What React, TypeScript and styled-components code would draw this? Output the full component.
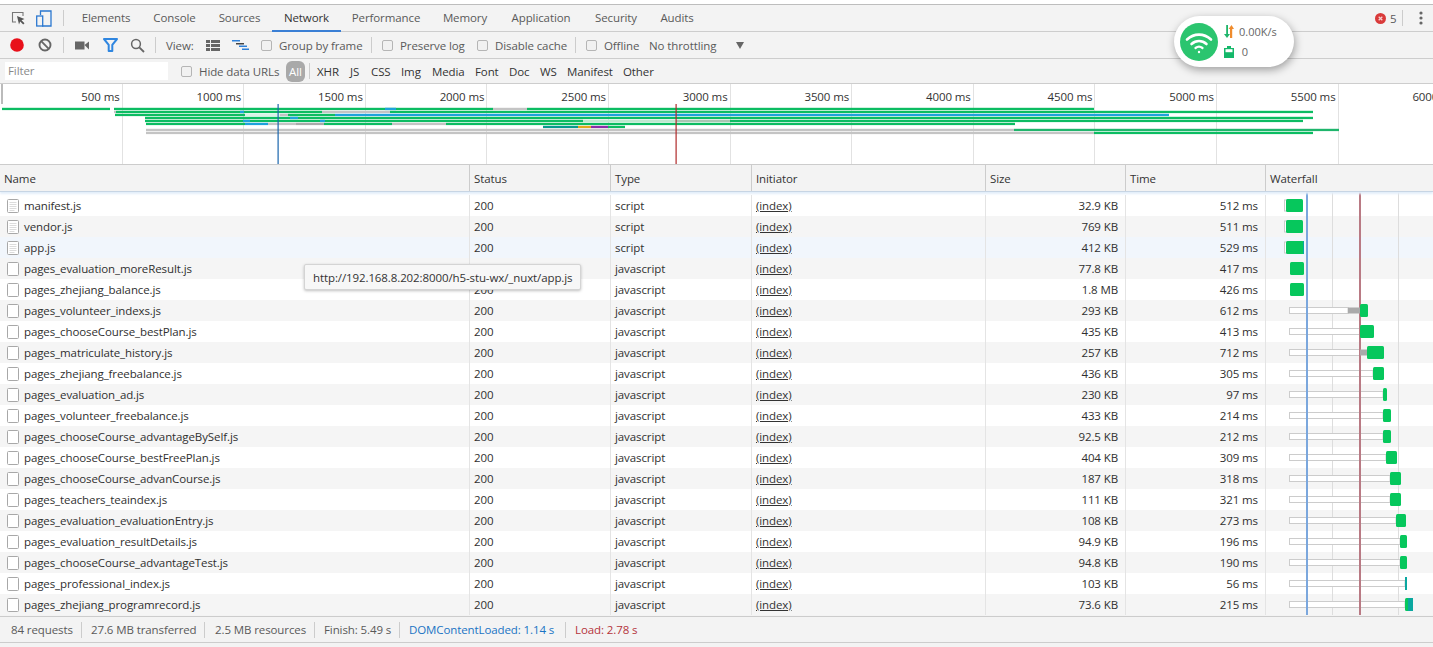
import React from "react";
import styled, { createGlobalStyle } from "styled-components";

const Global = createGlobalStyle`
  html, body { margin: 0; padding: 0; height: 647px; overflow: hidden; background: #f3f3f3; }
  #root { height: 647px; }
`;

const Page = styled.div`
  position: relative;
  width: 1433px;
  height: 647px;
  overflow: hidden;
  background: #f3f3f3;
  color: #303942;
  font: 11.5px "Open Sans", "Noto Sans", sans-serif;
  letter-spacing: -0.1px;
  padding-top: 4px;
  box-sizing: border-box;
  box-shadow: inset 0 4px 0 #fff;
`;

const TabBar = styled.div`
  display: flex;
  align-items: stretch;
  height: 28px;
  box-sizing: border-box;
  border-top: 1px solid #bdbdbd;
  border-bottom: 1px solid #cdcdcd;
  padding-left: 6px;
`;
const IconSlot = styled.div<{ $w: number }>`
  width: ${(p) => p.$w}px;
  flex: none;
  display: flex;
  align-items: center;
  justify-content: center;
`;
const VSep = styled.div<{ $mx?: number }>`
  width: 1px;
  height: 16px;
  flex: none;
  align-self: center;
  background: #ccc;
  margin: 0 ${(p) => p.$mx ?? 0}px;
`;
const Tab = styled.div<{ $w: number; $active?: boolean }>`
  width: ${(p) => p.$w}px;
  flex: none;
  box-sizing: border-box;
  display: flex;
  align-items: center;
  justify-content: center;
  white-space: nowrap;
  color: ${(p) => (p.$active ? "#333" : "#5a5a5a")};
  margin-bottom: -1px;
  border-bottom: 2px solid ${(p) => (p.$active ? "#3a7fd5" : "transparent")};
`;
const TabTools = styled.div`
  margin-left: auto;
  display: flex;
  align-items: center;
  color: #5a5a5a;
`;
const ErrorCount = styled.span`
  margin: 0 5px 0 4px;
  width: 7px;
`;

const Toolbar = styled.div<{ $h: number }>`
  display: flex;
  align-items: center;
  height: ${(p) => p.$h}px;
  box-sizing: border-box;
  border-bottom: 1px solid #cdcdcd;
  white-space: nowrap;
  color: #5a5a5a;
`;
const Label = styled.span<{ $w: number; $dark?: boolean }>`
  width: ${(p) => p.$w}px;
  flex: none;
  white-space: nowrap;
  color: ${(p) => (p.$dark ? "#333" : "#5a5a5a")};
`;
const Check = styled.span<{ $ml: number }>`
  width: 11px;
  height: 11px;
  flex: none;
  box-sizing: border-box;
  border: 1px solid #b5b5b5;
  border-radius: 2px;
  background: #f1f1f1;
  margin-left: ${(p) => p.$ml}px;
  margin-right: 7px;
`;
const FilterInput = styled.div`
  width: 163px;
  height: 18px;
  margin-left: 5px;
  flex: none;
  background: #fff;
  color: #8a8a8a;
  padding-left: 3px;
  line-height: 18px;
  box-sizing: border-box;
`;
const AllPill = styled.span`
  width: 19px;
  height: 21px;
  margin-left: 6px;
  flex: none;
  border-radius: 6px;
  background: #a9a9a9;
  color: #fff;
  display: flex;
  align-items: center;
  justify-content: center;
`;

const Overview = styled.div`
  position: relative;
  height: 81px;
  background: #fff;
  border-bottom: 1px solid #ccc;
  box-sizing: border-box;
  overflow: hidden;
  display: flex;
  padding-left: 1px;
`;
const Grip = styled.div`
  position: absolute;
  left: 1px;
  top: 0;
  width: 2px;
  height: 20px;
  background: #bbb;
`;
const Tick = styled.div`
  width: 121.6px;
  height: 100%;
  flex: none;
  box-sizing: border-box;
  border-right: 1px solid #e2e2e2;
  text-align: right;
  padding: 5px 2px 0 0;
  color: #333;
  white-space: nowrap;
`;
const OverviewChart = styled.svg`
  position: absolute;
  left: 0;
  top: 0;
`;

const Cols = "469px 141px 141px 234px 140px 140px 1fr";
const HeaderRow = styled.div`
  display: grid;
  grid-template-columns: ${Cols};
  height: 27px;
  box-sizing: border-box;
  border-bottom: 1px solid #c7d5e4;
  box-shadow: 0 2px 2px #e3eefa;
  position: relative;
  z-index: 1;
`;
const HeadCell = styled.div`
  display: flex;
  align-items: center;
  padding-left: 4px;
  border-left: 1px solid #ccc;
  color: #333;
  &:first-child { border-left: 0; }
`;
const Body = styled.div`
  position: relative;
  padding-top: 3px;
  background: #fff;
`;
const Row = styled.div<{ $tone: "white" | "grey" | "hover" }>`
  display: grid;
  grid-template-columns: ${Cols};
  height: 21px;
  background: ${(p) => (p.$tone === "white" ? "#fff" : p.$tone === "grey" ? "#f5f5f5" : "#f1f6fc")};
`;
const Cell = styled.div<{ $right?: boolean }>`
  display: flex;
  align-items: center;
  justify-content: ${(p) => (p.$right ? "flex-end" : "flex-start")};
  padding: 0 ${(p) => (p.$right ? "7px" : "0")} 0 4px;
  border-left: 1px solid #e4e4e4;
  color: #303030;
  white-space: nowrap;
  overflow: hidden;
  &:first-child { border-left: 0; padding-left: 7px; }
`;
const InitiatorLink = styled.span`
  text-decoration: underline;
  color: #333;
`;
const FileName = styled.span`
  margin-left: 5px;
`;
const WaterfallChart = styled.svg`
  position: absolute;
  right: 0;
  top: 0;
`;

const Tooltip = styled.div`
  position: absolute;
  left: 304px;
  top: 264px;
  width: 277px;
  height: 26px;
  box-sizing: border-box;
  background: #f7f7f7;
  border: 1px solid #d4d4d4;
  border-radius: 2px;
  box-shadow: 0 1px 3px rgba(0, 0, 0, 0.25);
  display: flex;
  align-items: center;
  padding-left: 8px;
  color: #333;
  white-space: nowrap;
  z-index: 2;
`;

const Footer = styled.div`
  display: flex;
  align-items: center;
  height: 27px;
  box-sizing: border-box;
  border-top: 1px solid #ccc;
  border-bottom: 1px solid #ccc;
  margin-top: 1px;
  color: #5a5a5a;
  white-space: nowrap;
`;
const Stat = styled.span<{ $w: number; $pad: number; $color?: string }>`
  width: ${(p) => p.$w}px;
  flex: none;
  box-sizing: border-box;
  padding-left: ${(p) => p.$pad}px;
  border-right: 1px solid #ccc;
  line-height: 16px;
  color: ${(p) => p.$color ?? "#5a5a5a"};
  &:last-child { border-right: 0; }
`;

const Widget = styled.div`
  position: absolute;
  left: 1174px;
  top: 16px;
  width: 120px;
  height: 51px;
  border-radius: 26px;
  background: #fff;
  box-shadow: 1px 3px 8px rgba(0, 0, 0, 0.35);
  display: flex;
  align-items: center;
  padding-left: 6px;
  box-sizing: border-box;
  z-index: 2;
`;
const WifiBadge = styled.div`
  width: 38px;
  height: 38px;
  flex: none;
  border-radius: 50%;
  background: #2bc56f;
  display: flex;
  align-items: center;
  justify-content: center;
`;
const WidgetStats = styled.div`
  display: flex;
  flex-direction: column;
  gap: 4px;
  margin-left: 6px;
  color: #666;
  font-size: 11px;
  letter-spacing: 0;
`;
const WidgetLine = styled.div`
  display: flex;
  align-items: center;
  gap: 5px;
  height: 16px;
`;

type R = { name: string; type: string; size: string; time: string; doc?: boolean };
const rows: R[] = [
  { name: "manifest.js", type: "script", size: "32.9 KB", time: "512 ms", doc: true },
  { name: "vendor.js", type: "script", size: "769 KB", time: "511 ms", doc: true },
  { name: "app.js", type: "script", size: "412 KB", time: "529 ms", doc: true },
  { name: "pages_evaluation_moreResult.js", type: "javascript", size: "77.8 KB", time: "417 ms" },
  { name: "pages_zhejiang_balance.js", type: "javascript", size: "1.8 MB", time: "426 ms" },
  { name: "pages_volunteer_indexs.js", type: "javascript", size: "293 KB", time: "612 ms" },
  { name: "pages_chooseCourse_bestPlan.js", type: "javascript", size: "435 KB", time: "413 ms" },
  { name: "pages_matriculate_history.js", type: "javascript", size: "257 KB", time: "712 ms" },
  { name: "pages_zhejiang_freebalance.js", type: "javascript", size: "436 KB", time: "305 ms" },
  { name: "pages_evaluation_ad.js", type: "javascript", size: "230 KB", time: "97 ms" },
  { name: "pages_volunteer_freebalance.js", type: "javascript", size: "433 KB", time: "214 ms" },
  { name: "pages_chooseCourse_advantageBySelf.js", type: "javascript", size: "92.5 KB", time: "212 ms" },
  { name: "pages_chooseCourse_bestFreePlan.js", type: "javascript", size: "404 KB", time: "309 ms" },
  { name: "pages_chooseCourse_advanCourse.js", type: "javascript", size: "187 KB", time: "318 ms" },
  { name: "pages_teachers_teaindex.js", type: "javascript", size: "111 KB", time: "321 ms" },
  { name: "pages_evaluation_evaluationEntry.js", type: "javascript", size: "108 KB", time: "273 ms" },
  { name: "pages_evaluation_resultDetails.js", type: "javascript", size: "94.9 KB", time: "196 ms" },
  { name: "pages_chooseCourse_advantageTest.js", type: "javascript", size: "94.8 KB", time: "190 ms" },
  { name: "pages_professional_index.js", type: "javascript", size: "103 KB", time: "56 ms" },
  { name: "pages_zhejiang_programrecord.js", type: "javascript", size: "73.6 KB", time: "215 ms" },
];

const wf: { stub?: boolean; boxEnd?: number; greyFrom?: number; greyTo?: number; from: number; to: number; tail?: number }[] = [
  { stub: true, from: 1286, to: 1303 },
  { stub: true, from: 1286, to: 1303 },
  { stub: true, from: 1286, to: 1304, tail: 1 },
  { from: 1290, to: 1304 },
  { from: 1290, to: 1304 },
  { boxEnd: 1348, greyFrom: 1348, greyTo: 1360, from: 1360, to: 1368 },
  { boxEnd: 1360, from: 1360, to: 1374 },
  { boxEnd: 1360, greyFrom: 1360, greyTo: 1367, from: 1367, to: 1384 },
  { boxEnd: 1373, from: 1373, to: 1384 },
  { boxEnd: 1383, from: 1383, to: 1387 },
  { boxEnd: 1383, from: 1383, to: 1391 },
  { boxEnd: 1383, from: 1383, to: 1391 },
  { boxEnd: 1386, from: 1386, to: 1397 },
  { boxEnd: 1390, from: 1390, to: 1401 },
  { boxEnd: 1390, from: 1390, to: 1401 },
  { boxEnd: 1396, from: 1396, to: 1406 },
  { boxEnd: 1400, from: 1400, to: 1407 },
  { boxEnd: 1400, from: 1400, to: 1407 },
  { boxEnd: 1405, from: 1405, to: 1407, tail: 2 },
  { boxEnd: 1405, from: 1405, to: 1413, tail: 5 },
];

const G = "#0cbc62";
const B = "#1ea2dc";
const GR = "#c4c4c4";
const ov: [number, number, number, string][] = [
  [109, 2, 110, G], [109, 114, 493, G], [109, 385, 396, B], [109, 493, 527, GR], [109, 527, 1094, G],
  [112, 114, 116, GR], [112, 116, 322, G], [112, 240, 244, B], [112, 322, 390, GR], [112, 390, 1313, G],
  [115, 115, 245, G], [115, 245, 280, "#d8f3e6"], [115, 280, 288, GR], [115, 288, 335, G], [115, 335, 1169, B],
  [118, 145, 1313, G], [118, 290, 298, B],
  [121, 145, 583, G], [121, 243, 250, B], [121, 320, 325, B], [121, 583, 676, "#bfe8d0"], [121, 676, 730, "#a9c6b3"], [121, 730, 1303, G],
  [124, 146, 245, G], [124, 245, 268, B], [124, 268, 296, GR], [124, 296, 324, "#aaa"], [124, 324, 392, G], [124, 392, 446, GR], [124, 446, 1015, G],
  [127, 543, 578, "#079a8e"], [127, 578, 591, "#e0a81c"], [127, 591, 608, "#8a2da8"], [127, 608, 625, G],
  [130, 146, 1014, GR], [130, 1014, 1339, "#1fb56c"],
  [133, 146, 1094, GR], [133, 1094, 1313, G],
];

const DocIcon = ({ lines }: { lines?: boolean }) => (
  <svg width="12" height="14" viewBox="0 0 12 14" style={{ flex: "none" }}>
    <rect x="0.5" y="0.5" width="11" height="13" rx="1" fill="#fff" stroke="#a8a8a8" />
    {lines && <path d="M2.5 3.5h7M2.5 5.5h7M2.5 7.5h7M2.5 9.5h7M2.5 11.5h5" stroke="#dcdcdc" strokeWidth="1" />}
  </svg>
);

export default function App() {
  const ticks = [500, 1000, 1500, 2000, 2500, 3000, 3500, 4000, 4500, 5000, 5500, 6000];
  return (
    <Page>
      <Global />
      <TabBar>
        <IconSlot $w={24}>
          <svg width="15" height="15" viewBox="0 0 15 15">
            <path d="M5 11H1.5V1.5H12V5" fill="none" stroke="#777" strokeWidth="1.1" />
            <path d="M6 5l7.5 3-3 1.2 3 3-1.3 1.3-3-3L8 13.5z" fill="#555" />
          </svg>
        </IconSlot>
        <IconSlot $w={27}>
          <svg width="16" height="17" viewBox="0 0 16 17">
            <path d="M4.5 5V1h10.5v15H6" fill="none" stroke="#2b78d0" strokeWidth="1.3" />
            <rect x="0.7" y="6" width="6" height="10" fill="none" stroke="#2b78d0" strokeWidth="1.3" />
          </svg>
        </IconSlot>
        <IconSlot $w={6} />
        <VSep />
        <IconSlot $w={6} />
        <Tab $w={72}>Elements</Tab>
        <Tab $w={65}>Console</Tab>
        <Tab $w={65}>Sources</Tab>
        <Tab $w={69} $active>Network</Tab>
        <Tab $w={90}>Performance</Tab>
        <Tab $w={68}>Memory</Tab>
        <Tab $w={84}>Application</Tab>
        <Tab $w={66}>Security</Tab>
        <Tab $w={56}>Audits</Tab>
        <TabTools>
          <svg width="11" height="11" viewBox="0 0 11 11">
            <circle cx="5.5" cy="5.5" r="5.5" fill="#d93a3a" />
            <path d="M3.7 3.7l3.6 3.6M7.3 3.7L3.7 7.3" stroke="#f6d0d0" strokeWidth="1.3" />
          </svg>
          <ErrorCount>5</ErrorCount>
          <VSep />
          <IconSlot $w={6} />
          <IconSlot $w={24}>
            <svg width="4" height="14" viewBox="0 0 4 14">
              <circle cx="2" cy="2" r="1.6" fill="#666" />
              <circle cx="2" cy="7" r="1.6" fill="#666" />
              <circle cx="2" cy="12" r="1.6" fill="#666" />
            </svg>
          </IconSlot>
        </TabTools>
      </TabBar>

      <Toolbar $h={27}>
        <IconSlot $w={34}>
          <svg width="14" height="14" viewBox="0 0 14 14"><circle cx="7" cy="7" r="6.8" fill="#e8101a" /></svg>
        </IconSlot>
        <IconSlot $w={22}>
          <svg width="14" height="14" viewBox="0 0 14 14">
            <circle cx="7" cy="7" r="5.5" fill="none" stroke="#666" strokeWidth="1.9" />
            <path d="M3.2 3.2l7.6 7.6" stroke="#666" strokeWidth="1.9" />
          </svg>
        </IconSlot>
        <IconSlot $w={7} />
        <VSep />
        <IconSlot $w={36}>
          <svg width="14" height="9" viewBox="0 0 14 9">
            <rect x="0" y="0.5" width="9.5" height="8" fill="#666" />
            <path d="M9.5 4l4.5-3.5v8z" fill="#666" />
          </svg>
        </IconSlot>
        <IconSlot $w={20}>
          <svg width="15" height="14" viewBox="0 0 15 14">
            <path d="M1 1h13L9.3 6.8V13H5.7V6.8z" fill="none" stroke="#2f86e0" strokeWidth="2" strokeLinejoin="round" />
          </svg>
        </IconSlot>
        <IconSlot $w={34}>
          <svg width="15" height="15" viewBox="0 0 15 15">
            <circle cx="6" cy="6" r="4.4" fill="none" stroke="#666" strokeWidth="1.5" />
            <path d="M9.3 9.3l4.7 4.7" stroke="#666" strokeWidth="1.8" />
          </svg>
        </IconSlot>
        <IconSlot $w={1} />
        <VSep />
        <IconSlot $w={10} />
        <Label $w={39}>View:</Label>
        <IconSlot $w={15}>
          <svg width="14" height="11" viewBox="0 0 14 11">
            <path d="M0 0h4v3H0zM5 0h9v3H5zM0 4h4v3H0zM5 4h9v3H5zM0 8h4v3H0zM5 8h9v3H5z" fill="#666" />
          </svg>
        </IconSlot>
        <IconSlot $w={12} />
        <IconSlot $w={18}>
          <svg width="18" height="11" viewBox="0 0 18 11">
            <path d="M0 0h8v1.5H0z" fill="#2f80d8" />
            <path d="M4 3h8v1.5H4z" fill="#444" />
            <path d="M7 5.5h8v1.5H7z" fill="#2f80d8" />
            <path d="M10 8.5h7V10h-7z" fill="#2f80d8" />
          </svg>
        </IconSlot>
        <Check $ml={11} />
        <Label $w={92}>Group by frame</Label>
        <VSep />
        <Check $ml={10} />
        <Label $w={76}>Preserve log</Label>
        <Check $ml={1} />
        <Label $w={80}>Disable cache</Label>
        <VSep />
        <Check $ml={10} />
        <Label $w={45}>Offline</Label>
        <Label $w={87}>No throttling</Label>
        <svg width="9" height="7" viewBox="0 0 9 7"><path d="M0 0h8L4 7z" fill="#666" /></svg>
      </Toolbar>

      <Toolbar $h={25}>
        <FilterInput>Filter</FilterInput>
        <Check $ml={13} />
        <Label $w={81}>Hide data URLs</Label>
        <AllPill>All</AllPill>
        <IconSlot $w={4} />
        <VSep />
        <IconSlot $w={7} />
        <Label $w={33} $dark>XHR</Label>
        <Label $w={21} $dark>JS</Label>
        <Label $w={30} $dark>CSS</Label>
        <Label $w={31} $dark>Img</Label>
        <Label $w={43} $dark>Media</Label>
        <Label $w={34} $dark>Font</Label>
        <Label $w={31} $dark>Doc</Label>
        <Label $w={27} $dark>WS</Label>
        <Label $w={56} $dark>Manifest</Label>
        <Label $w={40} $dark>Other</Label>
      </Toolbar>

      <Overview>
        <Grip />
        {ticks.map((t) => (
          <Tick key={t}>{t} ms</Tick>
        ))}
        <OverviewChart width="1433" height="81" viewBox="0 84 1433 81">
          {ov.map(([y, a, b, c], i) => (
            <rect key={i} x={a} y={y - 1.2} width={b - a} height={2.3} fill={c} />
          ))}
          <rect x="277.5" y="104" width="1.2" height="60" fill="#1a66ad" />
          <rect x="675.5" y="104" width="1.2" height="60" fill="#b02a2a" />
        </OverviewChart>
      </Overview>

      <HeaderRow>
        <HeadCell>Name</HeadCell>
        <HeadCell>Status</HeadCell>
        <HeadCell>Type</HeadCell>
        <HeadCell>Initiator</HeadCell>
        <HeadCell>Size</HeadCell>
        <HeadCell>Time</HeadCell>
        <HeadCell>Waterfall</HeadCell>
      </HeaderRow>

      <Body>
        {rows.map((r, i) => (
          <Row key={r.name} $tone={i === 2 ? "hover" : i % 2 ? "grey" : "white"}>
            <Cell>
              <DocIcon lines={r.doc} />
              <FileName>{r.name}</FileName>
            </Cell>
            <Cell>200</Cell>
            <Cell>{r.type}</Cell>
            <Cell><InitiatorLink>(index)</InitiatorLink></Cell>
            <Cell $right>{r.size}</Cell>
            <Cell $right>{r.time}</Cell>
            <Cell />
          </Row>
        ))}
        <WaterfallChart width="167" height="423" viewBox="1266 192 167 423">
          <rect x="1332" y="192" width="1" height="423" fill="#ddd" />
          <rect x="1398" y="192" width="1" height="423" fill="#ddd" />
          {wf.map((w, i) => {
            const cy = 205.5 + i * 21;
            return (
              <g key={i}>
                {w.stub && <rect x="1284.5" y={cy - 5.5} width="3" height="11" fill="#fff" stroke="#ccc" />}
                {w.boxEnd && (
                  <rect x="1289.5" y={cy - 3} width={w.boxEnd - 1289.5} height="6" fill="#fff" stroke="#ccc" />
                )}
              </g>
            );
          })}
          <rect x="1306" y="192" width="2" height="423" fill="#7ba7dd" />
          <rect x="1359" y="192" width="2" height="423" fill="#b97a84" />
          {wf.map((w, i) => {
            const cy = 205.5 + i * 21;
            return (
              <g key={i}>
                {w.greyFrom && <rect x={w.greyFrom} y={cy - 3} width={w.greyTo! - w.greyFrom} height="6" fill="#aaa" />}
                <rect x={w.from} y={cy - 6.5} width={w.to - w.from} height="13" rx="1.5" fill="#06c75c" />
                {w.tail && <rect x={w.to - w.tail} y={cy - 6.5} width={w.tail} height="13" fill="#0aa7a0" />}
              </g>
            );
          })}
        </WaterfallChart>
      </Body>

      <Footer>
        <Stat $w={82} $pad={11}>84 requests</Stat>
        <Stat $w={123} $pad={9}>27.6 MB transferred</Stat>
        <Stat $w={110} $pad={10}>2.5 MB resources</Stat>
        <Stat $w={85} $pad={9}>Finish: 5.49 s</Stat>
        <Stat $w={166} $pad={9} $color="#1a73c4">DOMContentLoaded: 1.14 s</Stat>
        <Stat $w={120} $pad={9} $color="#b5333b">Load: 2.78 s</Stat>
      </Footer>

      <Tooltip>http://192.168.8.202:8000/h5-stu-wx/_nuxt/app.js</Tooltip>

      <Widget>
        <WifiBadge>
          <svg width="28" height="24" viewBox="0 0 28 24" fill="none" stroke="#fff" strokeWidth="2.6" strokeLinecap="round">
            <path d="M2 9.5C9 3 19 3 26 9.5" />
            <path d="M6.5 14C11 10 17 10 21.5 14" />
            <path d="M10.5 18C12.5 16.5 15.5 16.5 17.5 18" strokeWidth="2.2" />
            <circle cx="14" cy="22" r="1.2" fill="#fff" stroke="none" />
          </svg>
        </WifiBadge>
        <WidgetStats>
          <WidgetLine>
            <svg width="10" height="13" viewBox="0 0 10 13">
              <path d="M2.2 0h1.8v9H6L3 13 0 9h2.2z" fill="#1fb56c" />
              <path d="M6 13V4H4.6L7.5 0 10 4H8.2v9z" fill="#ef8b2c" />
            </svg>
            <span>0.00K/s</span>
          </WidgetLine>
          <WidgetLine>
            <svg width="10" height="12" viewBox="0 0 10 12">
              <path d="M3 0h4v2h3v10H0V2h3z" fill="#14b86a" />
              <rect x="1.5" y="3.2" width="7" height="3" fill="#fff" />
            </svg>
            <span>&nbsp;0</span>
          </WidgetLine>
        </WidgetStats>
      </Widget>
    </Page>
  );
}
